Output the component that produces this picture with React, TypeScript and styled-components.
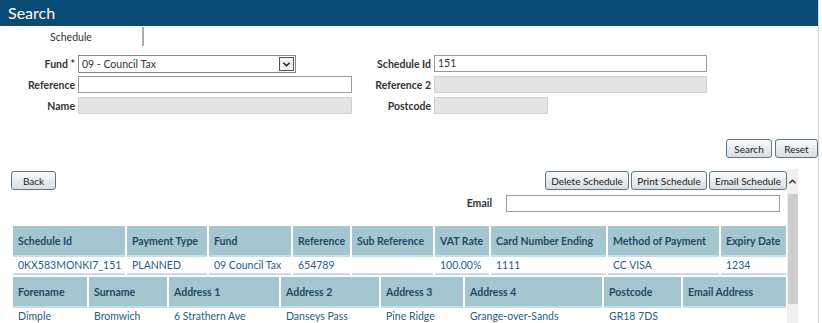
import React from 'react';
import styled, { createGlobalStyle } from 'styled-components';

const GlobalStyle = createGlobalStyle`
  html, body {
    margin: 0;
    padding: 0;
    background: #fff;
  }
  body {
    font-family: 'Segoe UI', Lato, 'Open Sans', sans-serif;
    font-size: 10.5px;
    color: #333;
  }
`;

const Page = styled.div`
  display: flex;
  width: 822px;
  height: 323px;
  overflow: hidden;
`;

const Main = styled.div`
  width: 818px;
  display: flex;
  flex-direction: column;
`;

const EdgeStrip = styled.div`
  width: 3px;
  border-left: 1px solid #d4d4d4;
  background: #fff;
`;

const TitleBar = styled.div`
  height: 26px;
  background: #0b4a72;
  color: #fff;
  font-size: 16px;
  line-height: 26px;
  padding-left: 8px;
`;

const TabBar = styled.div`
  height: 20px;
  display: flex;
`;

const Tab = styled.div`
  width: 142px;
  text-align: center;
  line-height: 21px;
  color: #333;
  border-right: 2px solid #a7afb6;
  margin-top: 1px;
`;

const FormGrid = styled.div`
  display: grid;
  grid-template-columns: 75px 274px 76px 273px;
  grid-auto-rows: 18px;
  column-gap: 3px;
  row-gap: 3px;
  margin-top: 9px;
`;

const Label = styled.label<{ $width?: number }>`
  font-weight: 700;
  text-align: right;
  line-height: 18px;
  color: #333;
  white-space: nowrap;
  ${p => (p.$width ? `width: ${p.$width}px;` : '')}
`;

const Input = styled.div<{ $disabled?: boolean; $width?: number }>`
  box-sizing: border-box;
  height: 17px;
  width: ${p => (p.$width ? `${p.$width}px` : '100%')};
  border: 1px solid ${p => (p.$disabled ? '#d0d0d0' : '#9a9a9a')};
  background: ${p => (p.$disabled ? '#e4e4e4' : '#fff')};
  padding-left: 3px;
  line-height: 15px;
  color: #333;
`;

const Select = styled.div`
  box-sizing: border-box;
  width: 218px;
  height: 18px;
  border: 1px solid #8a8a8a;
  display: flex;
  align-items: stretch;
  background: #fff;
`;

const SelectText = styled.span`
  flex: 1;
  padding-left: 3px;
  line-height: 16px;
`;

const SelectArrow = styled.span`
  width: 15px;
  margin: 1px;
  border: 1px solid #555;
  box-sizing: border-box;
  display: flex;
  align-items: center;
  justify-content: center;
  background: #f2f2f2;
`;

const SearchRow = styled.div`
  display: flex;
  justify-content: flex-end;
  gap: 3px;
  margin-top: 24px;
`;

const Button = styled.button<{ $w: number }>`
  box-sizing: border-box;
  width: ${p => p.$w}px;
  height: 19px;
  padding: 0;
  font-family: inherit;
  font-size: 10px;
  color: #222;
  border: 1px solid #5e7684;
  border-radius: 3px;
  background: linear-gradient(#fbfbfb, #e9ecee 50%, #d9dee2);
  cursor: pointer;
  line-height: 16px;
`;

const Results = styled.div`
  display: flex;
  margin-top: 11px;
  flex: 1;
`;

const ResultsContent = styled.div`
  width: 787px;
  padding-left: 11px;
  box-sizing: border-box;
`;

const ActionRow = styled.div`
  display: flex;
  justify-content: space-between;
  align-items: flex-start;
  margin-top: 2px;
`;

const ActionGroup = styled.div`
  display: flex;
  gap: 2px;
`;

const EmailRow = styled.div`
  display: flex;
  align-items: center;
  margin-top: 4px;
  padding-left: 441px;
  gap: 14px;
`;

const Scrollbar = styled.div`
  width: 11px;
  background: #f0f0f0;
  display: flex;
  flex-direction: column;
  align-items: center;
`;

const ScrollArrow = styled.div`
  height: 25px;
  display: flex;
  align-items: center;
  justify-content: center;
`;

const ScrollThumb = styled.div`
  width: 10px;
  height: 110px;
  background: #cdcdcd;
`;

const Grid = styled.table<{ $top?: number }>`
  border-collapse: separate;
  border-spacing: 2px 0;
  width: 777px;
  table-layout: fixed;
  margin-top: ${p => p.$top ?? 0}px;
`;

const Th = styled.th`
  background: #a4c6cf;
  color: #1d4a68;
  font-weight: 700;
  text-align: left;
  padding: 0 0 0 5px;
  height: 29px;
  border-bottom: 2px solid #c4dfea;
  white-space: nowrap;
  overflow: hidden;
`;

const Td = styled.td`
  color: #2a5c86;
  padding: 0 0 0 5px;
  height: 16px;
  border-bottom: 2px solid #c4dfea;
  white-space: nowrap;
`;

const Spacer = styled.tr`
  height: 2px;
`;

const Chevron = () => (
  <svg width="9" height="9" viewBox="0 0 10 10">
    <polyline points="1.5,3 5,6.5 8.5,3" fill="none" stroke="#222" strokeWidth="1.6" />
  </svg>
);

const ChevronUp = () => (
  <svg width="9" height="9" viewBox="0 0 10 10">
    <polyline points="1.5,7 5,3.5 8.5,7" fill="none" stroke="#333" strokeWidth="1.6" />
  </svg>
);

const scheduleCols = [
  { title: 'Schedule Id', w: 112, value: '0KX583MONKI7_151' },
  { title: 'Payment Type', w: 80, value: 'PLANNED' },
  { title: 'Fund', w: 82, value: '09 Council Tax' },
  { title: 'Reference', w: 57, value: '654789' },
  { title: 'Sub Reference', w: 81, value: '' },
  { title: 'VAT Rate', w: 54, value: '100.00%' },
  { title: 'Card Number Ending', w: 115, value: '1111' },
  { title: 'Method of Payment', w: 111, value: 'CC VISA' },
  { title: 'Expiry Date', w: 65, value: '1234' },
];

const personCols = [
  { title: 'Forename', w: 74, value: 'Dimple' },
  { title: 'Surname', w: 78, value: 'Bromwich' },
  { title: 'Address 1', w: 110, value: '6 Strathern Ave' },
  { title: 'Address 2', w: 98, value: 'Danseys Pass' },
  { title: 'Address 3', w: 82, value: 'Pine Ridge' },
  { title: 'Address 4', w: 137, value: 'Grange-over-Sands' },
  { title: 'Postcode', w: 77, value: 'GR18 7DS' },
  { title: 'Email Address', w: 103, value: '' },
];

const App: React.FC = () => {
  return (
    <>
      <GlobalStyle />
      <Page>
        <Main>
          <TitleBar>Search</TitleBar>
          <TabBar>
            <Tab>Schedule</Tab>
          </TabBar>

          <FormGrid>
            <Label>Fund *</Label>
            <Select>
              <SelectText>09 - Council Tax</SelectText>
              <SelectArrow>
                <Chevron />
              </SelectArrow>
            </Select>
            <Label>Schedule Id</Label>
            <Input>151</Input>

            <Label>Reference</Label>
            <Input />
            <Label>Reference 2</Label>
            <Input $disabled />

            <Label>Name</Label>
            <Input $disabled />
            <Label>Postcode</Label>
            <Input $disabled $width={114} />
          </FormGrid>

          <SearchRow>
            <Button $w={46}>Search</Button>
            <Button $w={43}>Reset</Button>
          </SearchRow>

          <Results>
            <ResultsContent>
              <ActionRow>
                <Button $w={45}>Back</Button>
                <ActionGroup>
                  <Button $w={84}>Delete Schedule</Button>
                  <Button $w={76}>Print Schedule</Button>
                  <Button $w={78}>Email Schedule</Button>
                </ActionGroup>
              </ActionRow>

              <EmailRow>
                <Label $width={40}>Email</Label>
                <Input $width={274} />
              </EmailRow>

              <Grid $top={14}>
                <colgroup>
                  {scheduleCols.map(c => (
                    <col key={c.title} style={{ width: c.w }} />
                  ))}
                </colgroup>
                <tbody>
                  <tr>
                    {scheduleCols.map(c => (
                      <Th key={c.title}>{c.title}</Th>
                    ))}
                  </tr>
                  <tr>
                    {scheduleCols.map(c => (
                      <Td key={c.title}>{c.value}</Td>
                    ))}
                  </tr>
                  <Spacer />
                </tbody>
              </Grid>

              <Grid>
                <colgroup>
                  {personCols.map(c => (
                    <col key={c.title} style={{ width: c.w }} />
                  ))}
                </colgroup>
                <tbody>
                  <tr>
                    {personCols.map(c => (
                      <Th key={c.title}>{c.title}</Th>
                    ))}
                  </tr>
                  <tr>
                    {personCols.map(c => (
                      <Td key={c.title}>{c.value}</Td>
                    ))}
                  </tr>
                </tbody>
              </Grid>
            </ResultsContent>
            <Scrollbar>
              <ScrollArrow>
                <ChevronUp />
              </ScrollArrow>
              <ScrollThumb />
            </Scrollbar>
          </Results>
        </Main>
        <EdgeStrip />
      </Page>
    </>
  );
};

export default App;
